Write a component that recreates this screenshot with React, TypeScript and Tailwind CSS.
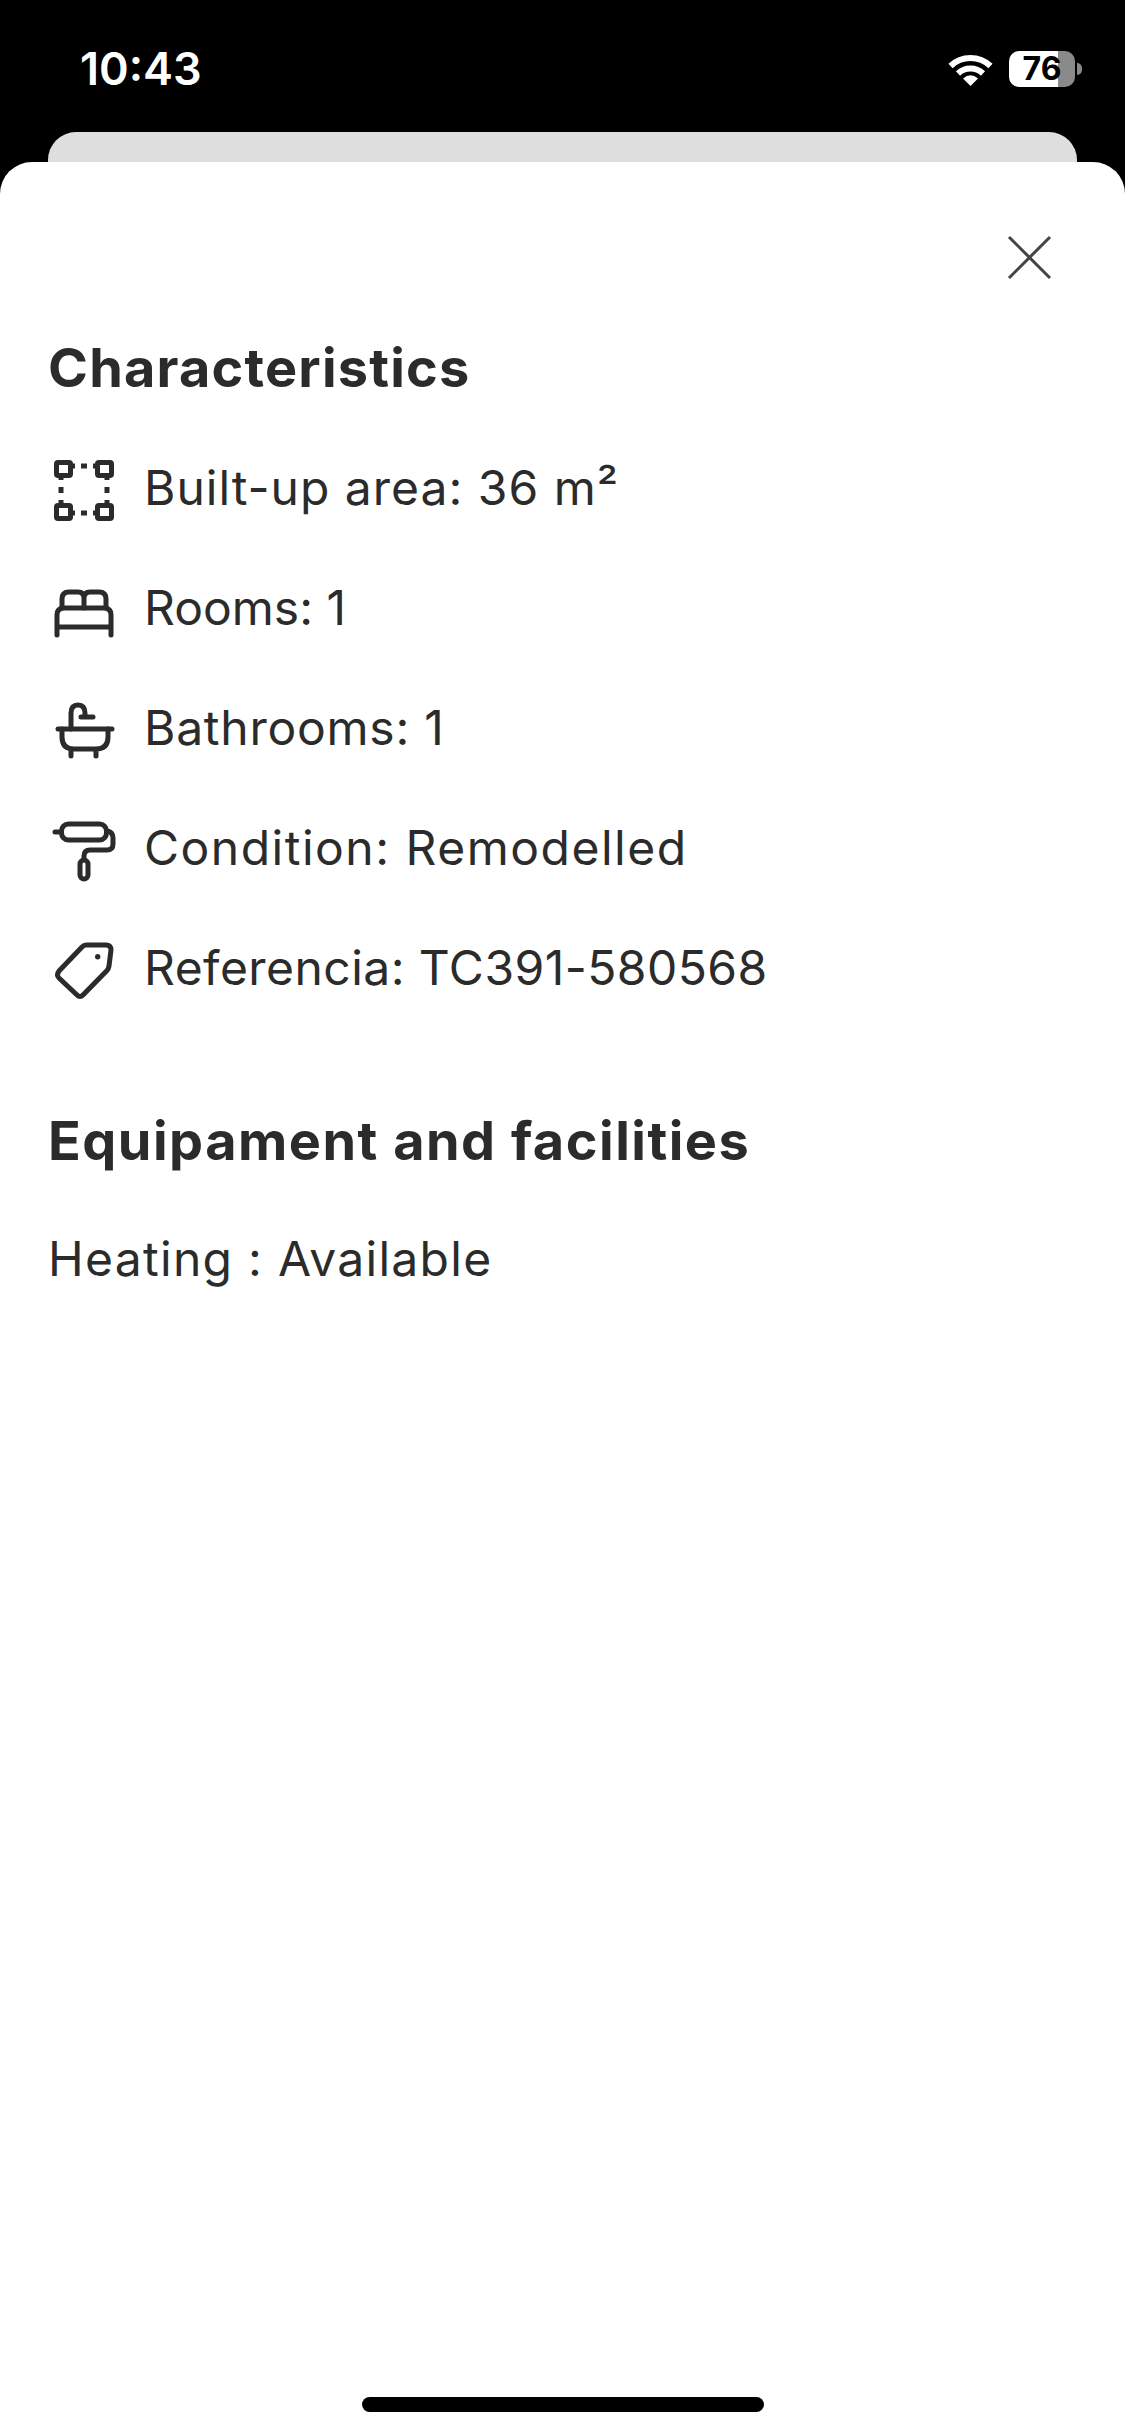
const iconProps = {
  width: 72,
  height: 72,
  viewBox: '0 0 72 72',
  fill: 'none',
  stroke: '#2b2b2b',
  strokeWidth: 5,
  strokeLinecap: 'round' as const,
  strokeLinejoin: 'round' as const,
  className: 'shrink-0',
};

function AreaIcon() {
  return (
    <svg {...iconProps}>
      <rect x="8.5" y="8.5" width="14" height="13" rx="1.5" />
      <rect x="49.5" y="8.5" width="14" height="13" rx="1.5" />
      <rect x="8.5" y="51.5" width="14" height="13" rx="1.5" />
      <rect x="49.5" y="51.5" width="14" height="13" rx="1.5" />
      <path
        strokeLinecap="butt"
        d="M13 21v5M59 21v5M13 46v5M59 46v5M22 12h5M45 12h5M22 59h5M45 59h5M33 12h6M33 59h6M13 33v6M59 33v6"
      />
    </svg>
  );
}

function BedIcon() {
  return (
    <svg {...iconProps}>
      <path d="M9 61V41q0-7 7-7h40q7 0 7 7v20M9 53h54" />
      <path d="M14 34v-9q0-7 7-7h9q6 0 6 6v10M36 24q0-6 6-6h9q7 0 7 7v9" />
    </svg>
  );
}

function BathIcon() {
  return (
    <svg {...iconProps}>
      <path d="M10 35h54" />
      <path d="M14 35v8q0 12 12 12h22q12 0 12-12v-8M23 55v7M48 55v7" />
      <path d="M23 35V19q0-8 7-8t7 8v3M33 23h12" />
    </svg>
  );
}

function RollerIcon() {
  return (
    <svg {...iconProps}>
      <rect x="13.5" y="10" width="45" height="16" rx="7" />
      <path d="M7 18h6M59 17q6 1 6 7v6q0 6-6 6H42q-6 0-6 6v3" />
      <rect x="32" y="46" width="8" height="19" rx="4" />
    </svg>
  );
}

function TagIcon() {
  return (
    <svg {...iconProps}>
      <path d="M38 11h20q5 0 5 5l-2 16q-.5 3-2 4.5L35 61q-3 3-6 0L11 44q-3-3 0-7l23-24q2-2 4-2z" />
      <circle cx="49.7" cy="22.7" r="2.7" fill="#2b2b2b" stroke="none" />
    </svg>
  );
}

function WifiIcon() {
  return (
    <svg width="45" height="33" viewBox="0 0 45 33" fill="none" stroke="white" strokeWidth="6">
      <path d="M2.5 13A29 29 0 0 1 42.5 13" />
      <path d="M10 20.5A18 18 0 0 1 35 20.5" />
      <path d="M22.5 33L15 25.5Q22.5 19 30 25.5Z" fill="white" stroke="none" />
    </svg>
  );
}

function Battery() {
  return (
    <div className="flex items-center gap-[2px]">
      <div className="relative flex h-[36px] w-[66px]">
        <div className="w-[49px] rounded-l-[10px] bg-white" />
        <div className="flex-1 rounded-r-[10px] bg-[#8a8a8a]" />
        <span className="absolute inset-0 flex items-center justify-center text-[32px] leading-none font-bold text-black font-['Inter',sans-serif]">
          76
        </span>
      </div>
      <div className="h-[12px] w-[5px] rounded-r-full bg-[#8a8a8a]" />
    </div>
  );
}

export default function App() {
  const rows = [
    { id: 1, icon: <AreaIcon />, text: 'Built-up area: 36 m²', spacing: 'tracking-[1px]' },
    { id: 2, icon: <BedIcon />, text: 'Rooms: 1', spacing: 'tracking-[0px]' },
    { id: 3, icon: <BathIcon />, text: 'Bathrooms: 1', spacing: 'tracking-[0.75px]' },
    { id: 4, icon: <RollerIcon />, text: 'Condition: Remodelled', spacing: 'tracking-[1.5px]' },
    { id: 5, icon: <TagIcon />, text: 'Referencia: TC391-580568', spacing: 'tracking-[0.45px]' },
  ];

  return (
    <div className="flex h-[2436px] w-[1125px] flex-col overflow-hidden bg-black font-['Inter',sans-serif]">
      <div className="flex h-[132px] shrink-0 items-start justify-between pt-[44px] pr-[43px] pl-[80px]">
        <span className="text-[45px] leading-[50px] font-semibold text-white">10:43</span>
        <div className="flex items-center gap-[16px] pt-[7px]">
          <WifiIcon />
          <Battery />
        </div>
      </div>
      <div className="mx-[48px] h-[30px] shrink-0 rounded-t-[28px] bg-[#dedede]" />
      <div className="flex flex-1 flex-col rounded-t-[32px] bg-white pt-[71px] pb-[24px] text-[#2b2b2b]">
        <div className="flex justify-end pr-[72px]">
          <svg width="48" height="48" viewBox="0 0 48 48" fill="none" stroke="#444" strokeWidth="3">
            <path d="M4 4l41 41M45 4L4 45" />
          </svg>
        </div>
        <div className="mt-[51px] flex flex-col px-[48px]">
          <h2 className="text-[54px] leading-[72px] font-bold tracking-[1.2px]">Characteristics</h2>
          <div className="mt-[50px] flex flex-col gap-[48px]">
            {rows.map((row) => (
              <div key={row.id} className="flex h-[72px] items-center gap-[24px]">
                {row.icon}
                <p className={`pb-[4px] text-[48px] leading-[68px] ${row.spacing}`}>{row.text}</p>
              </div>
            ))}
          </div>
          <h2 className="mt-[99px] text-[54px] leading-[72px] font-bold tracking-[1.5px]">
            Equipament and facilities
          </h2>
          <p className="mt-[46px] text-[48px] leading-[72px] tracking-[1.3px]">Heating : Available</p>
        </div>
        <div className="mt-auto h-[15px] w-[402px] self-center rounded-full bg-black" />
      </div>
    </div>
  );
}
